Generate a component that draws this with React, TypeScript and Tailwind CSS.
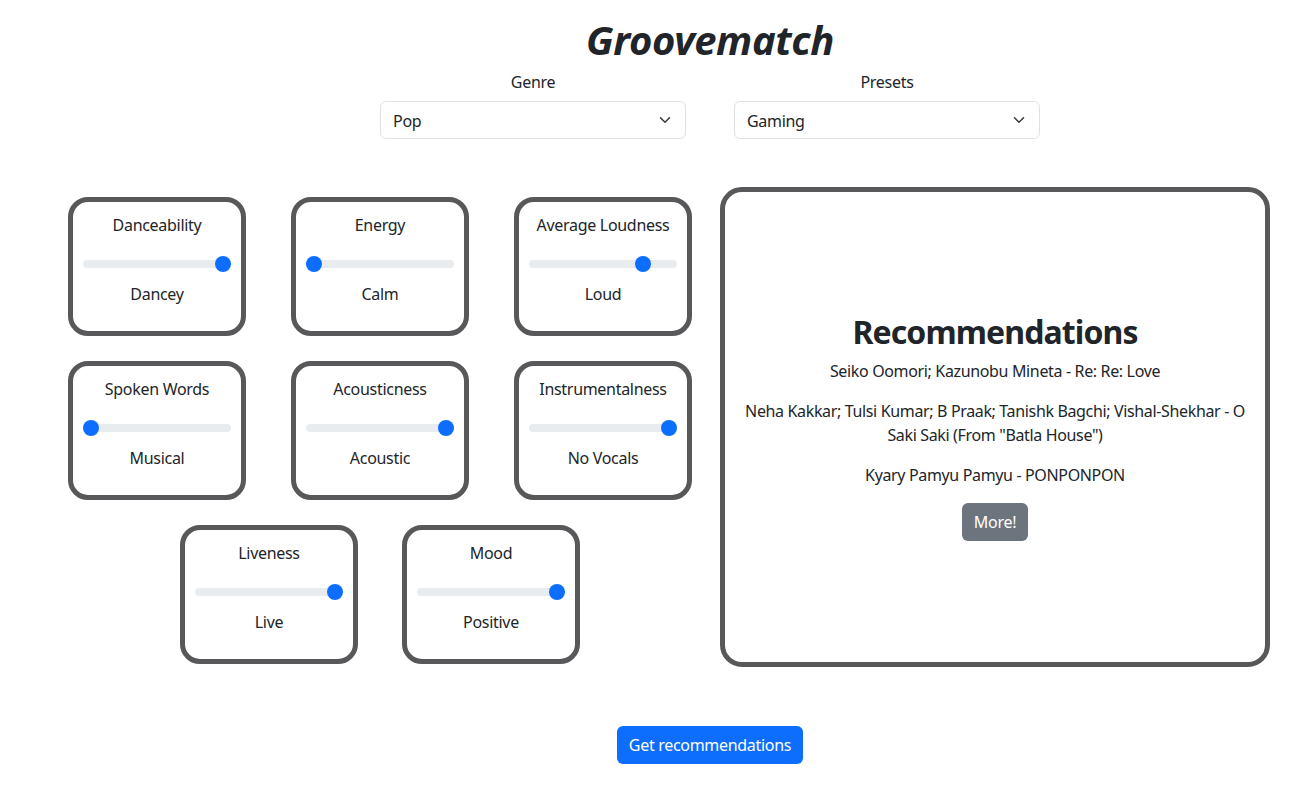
import React from "react";

const font = { fontFamily: '"Noto Sans", "Liberation Sans", sans-serif' };

type SliderCardProps = { title: string; value: number; label: string };

function SliderCard({ title, value, label }: SliderCardProps) {
  return (
    <div className="w-[178px] h-[139px] border-[5px] border-[#58585a] rounded-[20px] bg-white flex flex-col items-center pt-[11px] px-[10px]">
      <div className="text-[16px] leading-[24px] text-[#212529] tracking-[-0.3px]">{title}</div>
      <div className="relative w-full h-[24px] mt-[15px] flex items-center">
        <div className="w-full h-[8px] rounded-full bg-[#e9ecef]" />
        <div
          className="absolute top-[4px] w-[16px] h-[16px] rounded-full bg-[#0d6efd]"
          style={{ left: `calc((100% - 16px) * ${value})` }}
        />
      </div>
      <div className="text-[16px] leading-[24px] text-[#212529] mt-[6px] tracking-[-0.3px]">{label}</div>
    </div>
  );
}

function Chevron() {
  return (
    <span className="w-[16px] h-[12px] flex items-center justify-center">
      <svg width="12" height="12" viewBox="0 0 16 16" fill="none">
        <path d="m2 5 6 6 6-6" stroke="#343a40" strokeWidth="2" strokeLinecap="round" strokeLinejoin="round" />
      </svg>
    </span>
  );
}

function SelectBox({ label, value }: { label: string; value: string }) {
  return (
    <div className="flex flex-col items-center w-[306px]">
      <div className="text-[16px] leading-[24px] text-[#212529] tracking-[-0.3px]">{label}</div>
      <div className="mt-[7px] w-full h-[38px] border border-[#dee2e6] rounded-[6px] bg-white flex items-center justify-between pl-[12px] pr-[12px]">
        <span className="text-[16px] leading-[24px] text-[#212529] tracking-[-0.3px] pt-[1px]">{value}</span>
        <Chevron />
      </div>
    </div>
  );
}

export default function App() {
  return (
    <div className="w-full min-h-screen bg-white text-[#212529]" style={font}>
      <div className="flex flex-col items-center pl-[109px]">
        <h1 className="mt-[16px] text-[40px] leading-[48px] font-bold italic text-[#212529] tracking-[-0.4px]">Groovematch</h1>
        <div className="mt-[6px] flex gap-[48px]">
          <SelectBox label="Genre" value="Pop" />
          <SelectBox label="Presets" value="Gaming" />
        </div>
      </div>

      <div className="mt-[48px] flex pl-[68px] gap-[28px]">
        <div className="w-[624px] pt-[10px] flex flex-col gap-[25px]">
          <div className="flex gap-[45px]">
            <SliderCard title="Danceability" value={1} label="Dancey" />
            <SliderCard title="Energy" value={0} label="Calm" />
            <SliderCard title="Average Loudness" value={0.8} label="Loud" />
          </div>
          <div className="flex gap-[45px]">
            <SliderCard title="Spoken Words" value={0} label="Musical" />
            <SliderCard title="Acousticness" value={1} label="Acoustic" />
            <SliderCard title="Instrumentalness" value={1} label="No Vocals" />
          </div>
          <div className="flex justify-center gap-[44px]">
            <SliderCard title="Liveness" value={1} label="Live" />
            <SliderCard title="Mood" value={1} label="Positive" />
          </div>
        </div>

        <div className="w-[550px] h-[480px] border-[5px] border-[#58585a] rounded-[22px] flex flex-col items-center justify-center px-[20px] text-center">
          <h2 className="text-[32px] leading-[38px] font-bold text-[#212529] mb-[8px] tracking-[-0.9px]">Recommendations</h2>
          <p className="text-[16px] leading-[24px] mb-[16px] tracking-[-0.35px]">Seiko Oomori; Kazunobu Mineta - Re: Re: Love</p>
          <p className="text-[16px] leading-[24px] mb-[16px] tracking-[-0.35px]">
            Neha Kakkar; Tulsi Kumar; B Praak; Tanishk Bagchi; Vishal-Shekhar - O Saki Saki (From "Batla House")
          </p>
          <p className="text-[16px] leading-[24px] mb-[16px] tracking-[-0.35px]">Kyary Pamyu Pamyu - PONPONPON</p>
          <button className="h-[38px] px-[12px] rounded-[6px] bg-[#6c757d] text-white text-[16px] leading-[24px] tracking-[-0.3px]">More!</button>
        </div>
      </div>

      <div className="mt-[59px] flex justify-center pl-[109px]">
        <button className="h-[38px] px-[12px] rounded-[6px] bg-[#0d6efd] text-white text-[16px] leading-[24px] tracking-[-0.3px]">Get recommendations</button>
      </div>
    </div>
  );
}
